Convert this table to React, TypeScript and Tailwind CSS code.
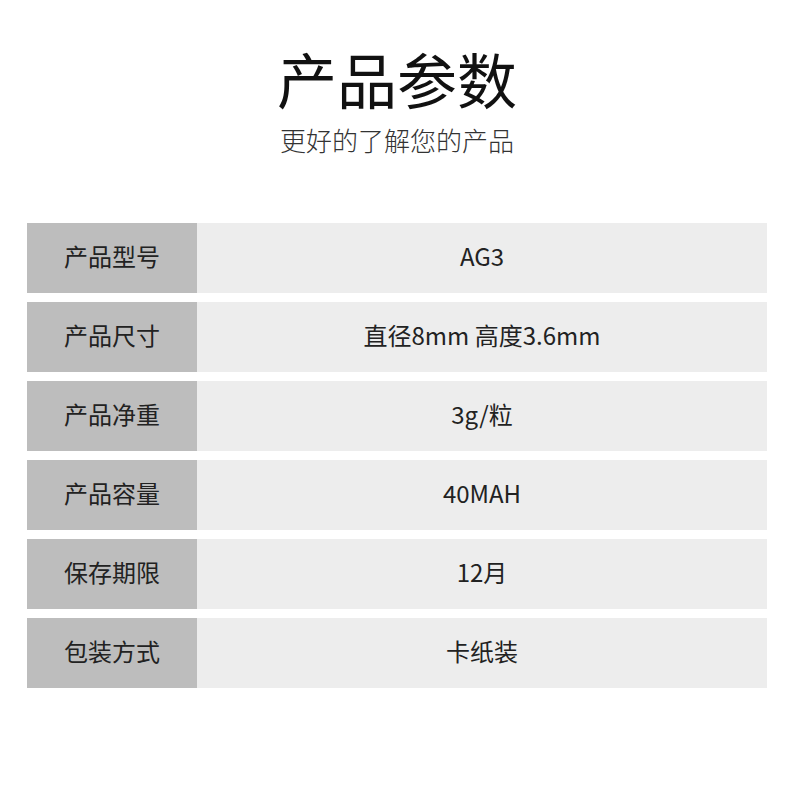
const rows = [
  { label: "产品型号", value: "AG3" },
  { label: "产品尺寸", value: "直径8mm 高度3.6mm" },
  { label: "产品净重", value: "3g/粒" },
  { label: "产品容量", value: "40MAH" },
  { label: "保存期限", value: "12月" },
  { label: "包装方式", value: "卡纸装" },
];

export default function App() {
  return (
    <div
      className="w-[800px] h-[800px] bg-white pl-[27px] pr-[33px] pt-[48px]"
      style={{ fontFamily: '"Noto Sans CJK SC", "Noto Sans", sans-serif' }}
    >
      <h1 className="text-center text-[60px] leading-[60px] font-normal text-[#111] pl-[-2px]">
        产品参数
      </h1>
      <p className="mt-[19px] text-center text-[26px] leading-[26px] font-light text-[#333]">
        更好的了解您的产品
      </p>

      <div className="mt-[70px] flex flex-col gap-[9px]">
        {rows.map((row) => (
          <div key={row.label} className="flex h-[70px]">
            <div className="w-[170px] bg-[#bdbdbd] flex items-center justify-center pb-[4px] text-[24px] text-[#222]">
              {row.label}
            </div>
            <div className="flex-1 bg-[#ededed] flex items-center justify-center pb-[4px] text-[24px] text-[#222]">
              {row.value}
            </div>
          </div>
        ))}
      </div>
    </div>
  );
}
